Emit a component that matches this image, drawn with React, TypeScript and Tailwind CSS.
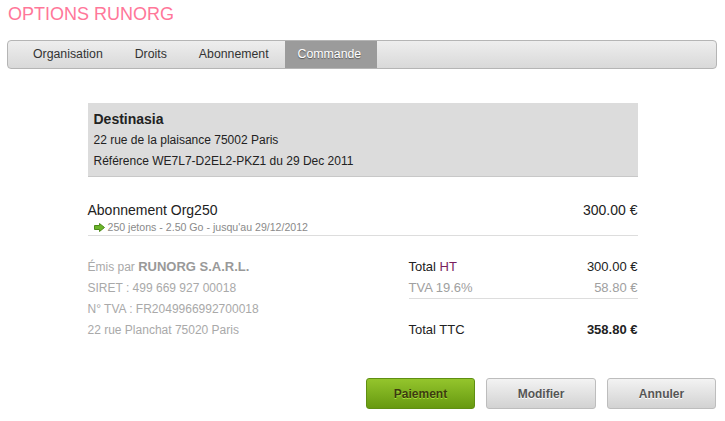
const tabs = ["Organisation", "Droits", "Abonnement", "Commande"];

function ArrowIcon() {
  return (
    <svg width="11" height="9" viewBox="0 0 11 9" className="shrink-0">
      <path
        d="M0.5 2.5 H5.5 V0.5 L10.5 4.5 L5.5 8.5 V6.5 H0.5 Z"
        fill="#6cb52a"
        stroke="#4d8a1a"
        strokeWidth="1"
        strokeLinejoin="round"
      />
    </svg>
  );
}

export default function App() {
  return (
    <div className="min-h-[421px] w-[725px] bg-white text-[12px] text-[#333] font-['Liberation_Sans',Arial,sans-serif]">
      {/* Title */}
      <h1 className="px-[8px] pt-[3px] text-[18px] leading-[22px] text-[#ff7799]">OPTIONS RUNORG</h1>

      {/* Tab bar */}
      <nav className="mx-[7px] mt-[15px] flex h-[29px] w-[710px] items-stretch rounded-[4px] border border-[#b5b5b5] bg-gradient-to-b from-[#eeeeee] to-[#d9d9d9] pl-[9px] text-[12.3px]">
        {tabs.map((t) => (
          <div
            key={t}
            className={
              t === "Commande"
                ? "flex items-center bg-[#9b9b9b] pl-[13px] pr-[16px] text-white [text-shadow:0_1px_1px_rgba(0,0,0,0.45)]"
                : "flex items-center px-[16px] text-[#333]"
            }
          >
            {t}
          </div>
        ))}
      </nav>

      {/* Order */}
      <div className="mx-auto mt-[34px] w-[550px]">
        <div className="border-b border-[#c8c8c8] bg-[#dcdcdc] px-[6px] pt-[6px] pb-[4px] leading-[21px] text-[#222]">
          <div className="text-[14px] font-bold">Destinasia</div>
          <div>22 rue de la plaisance 75002 Paris</div>
          <div>Référence WE7L7-D2EL2-PKZ1 du 29 Dec 2011</div>
        </div>

        <div className="mt-[24px] border-b border-[#dddddd]">
          <div className="flex justify-between text-[14px] leading-[18px] text-[#222]">
            <span>Abonnement Org250</span>
            <span>300.00 €</span>
          </div>
          <div className="mt-[1px] flex items-center gap-[3px] pl-[6px] text-[10.6px] leading-[15px] text-[#8a8a8a]">
            <ArrowIcon />
            <span>250 jetons - 2.50 Go - jusqu'au 29/12/2012</span>
          </div>
        </div>

        <div className="mt-[20px] flex justify-between leading-[21px]">
          <div className="text-[#a9a9a9]">
            <div>
              Émis par <span className="text-[13px] font-bold text-[#999]">RUNORG S.A.R.L.</span>
            </div>
            <div>SIRET : 499 669 927 00018</div>
            <div>N° TVA : FR2049966992700018</div>
            <div>22 rue Planchat 75020 Paris</div>
          </div>

          <div className="w-[229px] text-[13px]">
            <div className="flex justify-between text-[#222]">
              <span>
                Total <span className="text-[#7a1e5e]">HT</span>
              </span>
              <span>300.00 €</span>
            </div>
            <div className="flex justify-between border-b border-[#dddddd] text-[#a0a0a0]">
              <span>TVA 19.6%</span>
              <span>58.80 €</span>
            </div>
            <div className="mt-[20px] flex justify-between text-[#222]">
              <span>Total TTC</span>
              <span className="font-bold">358.80 €</span>
            </div>
          </div>
        </div>
      </div>

      {/* Actions */}
      <div className="mt-[37px] flex justify-end gap-[11px] pr-[9px]">
        <button className="h-[31px] w-[109px] rounded-[3px] border border-[#5f8f12] bg-gradient-to-b from-[#94c52c] to-[#67990f] text-[12px] font-bold text-[#3d3a10] [text-shadow:0_1px_0_#a6e03a]">
          Paiement
        </button>
        <button className="h-[31px] w-[110px] rounded-[3px] border border-[#bdbdbd] bg-gradient-to-b from-[#f3f3f3] to-[#d2d2d2] text-[12px] font-bold text-[#555] [text-shadow:0_1px_0_#fff]">
          Modifier
        </button>
        <button className="h-[31px] w-[109px] rounded-[3px] border border-[#bdbdbd] bg-gradient-to-b from-[#f3f3f3] to-[#d2d2d2] text-[12px] font-bold text-[#555] [text-shadow:0_1px_0_#fff]">
          Annuler
        </button>
      </div>
    </div>
  );
}
